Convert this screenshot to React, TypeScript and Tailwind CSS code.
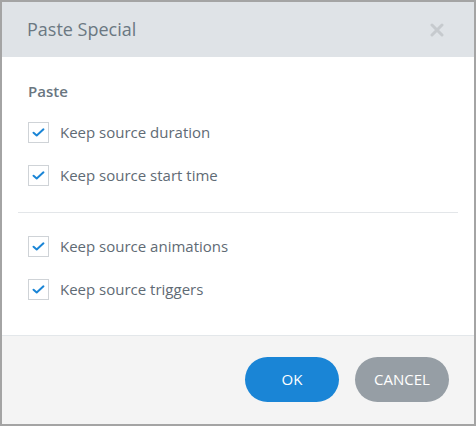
const groups = [
  ["Keep source duration", "Keep source start time"],
  ["Keep source animations", "Keep source triggers"],
];

export default function App() {
  return (
    <div
      className="flex h-[426px] w-[476px] flex-col border-2 border-[#a4a4a4] bg-white"
      style={{ fontFamily: '"Open Sans", "Noto Sans", sans-serif' }}
    >
      <header className="flex h-[55px] shrink-0 items-center justify-between bg-[#dfe3e7] pl-[25px] pr-[30px]">
        <h1 className="text-[18px] text-[#6b7882]">Paste Special</h1>
        <svg viewBox="0 0 14 14" className="h-[14px] w-[14px]">
          <path
            d="M2 2 L12 12 M12 2 L2 12"
            stroke="#c6cace"
            strokeWidth="3"
            strokeLinecap="round"
          />
        </svg>
      </header>

      <div className="flex flex-1 flex-col px-[16px] pt-[24px]">
        <p className="h-[20px] px-[10px] text-[15px] leading-[20px] font-semibold text-[#6a7680]">
          Paste
        </p>
        <div className="mt-[10px]">
          {groups[0].map((label) => (
            <CheckRow key={label} label={label} />
          ))}
        </div>
        <div className="mt-[15px] mb-[12px] h-px bg-[#e3e6e9]" />
        <div>
          {groups[1].map((label) => (
            <CheckRow key={label} label={label} />
          ))}
        </div>
      </div>

      <footer className="flex h-[89px] shrink-0 items-center justify-end gap-[16px] border-t border-[#e3e7ea] bg-[#f4f4f4] pr-[25px] pb-[2px]">
        <button
          className="h-[45px] w-[94px] rounded-full bg-[#1a85d6] text-[15px] text-white"
          type="button"
        >
          OK
        </button>
        <button
          className="h-[45px] w-[94px] rounded-full bg-[#969ea5] text-[15px] text-white"
          type="button"
        >
          CANCEL
        </button>
      </footer>
    </div>
  );
}

function CheckRow({ label }: { label: string }) {
  return (
    <label className="flex h-[43px] items-center gap-[11px] px-[10px]">
      <span className="flex h-[21px] w-[21px] items-center justify-center border border-[#cfd3d7] bg-white">
        <svg viewBox="0 0 14 10" className="h-[9px] w-[13px]">
          <path
            d="M1.5 5.2 L5 8.3 L12.5 1.5"
            fill="none"
            stroke="#1a85d6"
            strokeWidth="2.2"
            strokeLinecap="round"
            strokeLinejoin="round"
          />
        </svg>
      </span>
      <span className="text-[15px] text-[#5f6b75]">{label}</span>
    </label>
  );
}
